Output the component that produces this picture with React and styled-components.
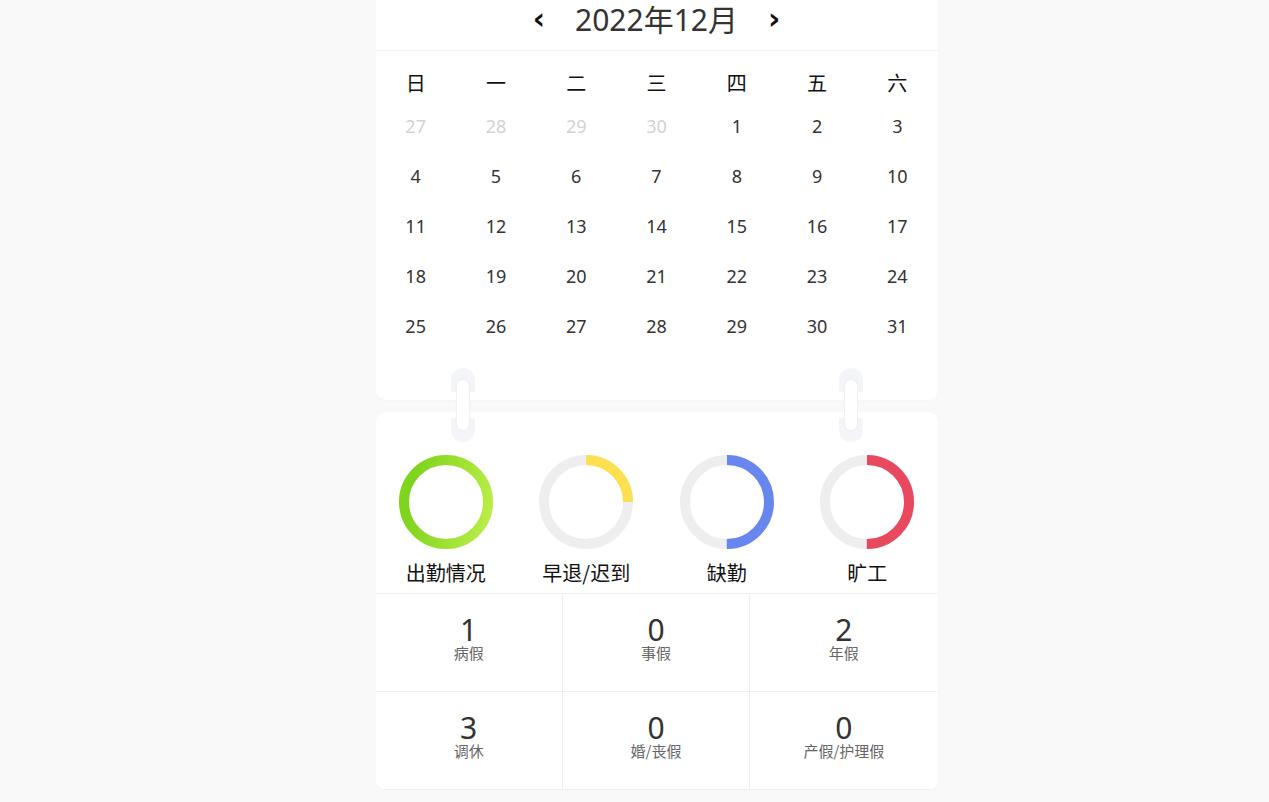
import React from "react";
import styled, { createGlobalStyle } from "styled-components";

const Global = createGlobalStyle`
  html, body { margin: 0; padding: 0; background: #f9f9f9; }
  body { font-family: "Noto Sans", "Noto Sans CJK SC", sans-serif; color: #333; }
`;

const Page = styled.div`
  width: 562px;
  margin-left: calc(50% - 259px);
  display: flex;
  flex-direction: column;
  gap: 12px;
  position: relative;
`;

const Card = styled.div`
  background: #fff;
  border-radius: ${(p) => (p.$top ? "0 0 10px 10px" : "10px")};
  box-shadow: 0 1px 3px rgba(0,0,0,0.02);
  overflow: hidden;
`;

const Header = styled.div`
  height: 40px;
  padding-bottom: 10px;
  border-bottom: 1px solid #f2f2f2;
  display: flex;
  align-items: center;
  justify-content: center;
  gap: 26px;
`;

const Arrow = styled.span`
  font-size: 30px;
  font-weight: 700;
  color: #111;
  line-height: 1;
  font-family: "DejaVu Sans", sans-serif;
  padding: 0 4px;
  margin-top: -2px;
`;

const Title = styled.div`
  font-size: 30px;
  color: #333;
  line-height: 40px;
`;

const Grid7 = styled.div`
  display: grid;
  grid-template-columns: repeat(7, 1fr);
`;

const WeekRow = styled(Grid7)`
  margin-top: 14px;
  height: 34px;
  margin-bottom: 2px;
  align-items: center;
`;

const WeekCell = styled.div`
  text-align: center;
  font-size: 20px;
  color: #111;
  font-family: "Noto Sans CJK SC", sans-serif;
`;

const Days = styled(Grid7)`
  grid-auto-rows: 50px;
  padding-bottom: 49px;
`;

const Day = styled.div`
  display: flex;
  align-items: center;
  justify-content: center;
  font-size: 18px;
  color: ${(p) => (p.$muted ? "#d2d2d2" : "#333")};
`;

const Hook = styled.div`
  position: absolute;
  top: 368px;
  left: ${(p) => p.$x}px;
  width: 24px;
  height: 74px;
  margin-left: -12px;
  border-radius: 12px;
  background: linear-gradient(#f4f5f8 0 24px, transparent 24px 50px, #f4f5f8 50px);
  display: flex;
  align-items: center;
  justify-content: center;
`;

const HookInner = styled.div`
  width: 12px;
  height: 50px;
  border-radius: 7px;
  background: #fff;
  border: 1px solid #eef0f3;
  box-shadow: 0 0 2px rgba(0,0,0,0.04);
`;

const Rings = styled.div`
  display: grid;
  grid-template-columns: repeat(4, 1fr);
  padding-top: 43px;
  padding-bottom: 6px;
`;

const RingItem = styled.div`
  display: flex;
  flex-direction: column;
  align-items: center;
`;

const RingLabel = styled.div`
  margin-top: 10px;
  font-size: 20px;
  line-height: 28px;
  color: #111;
  font-family: "Noto Sans CJK SC", sans-serif;
`;

const Stats = styled.div`
  display: grid;
  grid-template-columns: repeat(3, 1fr);
  border-top: 1px solid #efefef;
`;

const Stat = styled.div`
  height: 98px;
  padding-top: 21px;
  box-sizing: border-box;
  text-align: center;
  border-bottom: 1px solid #efefef;
  border-right: ${(p) => (p.$last ? "none" : "1px solid #efefef")};
`;

const StatNum = styled.div`
  font-size: 30px;
  line-height: 30px;
  color: #333;
`;

const StatLabel = styled.div`
  font-size: 15px;
  line-height: 16px;
  color: #666;
  font-family: "Noto Sans CJK SC", sans-serif;
`;

function Ring({ frac, color, gradient, id }) {
  const r = 42;
  const c = 2 * Math.PI * r;
  return (
    <svg width="94" height="94" viewBox="0 0 94 94">
      {gradient && (
        <defs>
          <linearGradient id={id} x1="0.2" y1="0" x2="0" y2="1">
            <stop offset="0" stopColor="#7fd41d" />
            <stop offset="1" stopColor="#bcee48" />
          </linearGradient>
        </defs>
      )}
      <circle cx="47" cy="47" r={r} fill="none" stroke="#eeeeee" strokeWidth="10" />
      <circle
        cx="47"
        cy="47"
        r={r}
        fill="none"
        stroke={gradient ? `url(#${id})` : color}
        strokeWidth="10"
        strokeDasharray={`${c * frac} ${c}`}
        transform="rotate(-90 47 47)"
      />
    </svg>
  );
}

const weeks = ["日", "一", "二", "三", "四", "五", "六"];
const days = [
  ...[27, 28, 29, 30].map((d) => ({ d, m: true })),
  ...Array.from({ length: 31 }, (_, i) => ({ d: i + 1, m: false })),
];

const rings = [
  { label: "出勤情况", frac: 1, gradient: true },
  { label: "早退/迟到", frac: 0.25, color: "#fde04f" },
  { label: "缺勤", frac: 0.5, color: "#6787ee" },
  { label: "旷工", frac: 0.5, color: "#e8495e" },
];

const stats = [
  { n: 1, l: "病假" },
  { n: 0, l: "事假" },
  { n: 2, l: "年假" },
  { n: 3, l: "调休" },
  { n: 0, l: "婚/丧假" },
  { n: 0, l: "产假/护理假" },
];

export default function App() {
  return (
    <>
      <Global />
      <Page>
        <Card $top>
          <Header>
            <Arrow>‹</Arrow>
            <Title>2022年12月</Title>
            <Arrow>›</Arrow>
          </Header>
          <WeekRow>
            {weeks.map((w) => (
              <WeekCell key={w}>{w}</WeekCell>
            ))}
          </WeekRow>
          <Days>
            {days.map((x, i) => (
              <Day key={i} $muted={x.m}>
                {x.d}
              </Day>
            ))}
          </Days>
        </Card>
        <Card>
          <Rings>
            {rings.map((r, i) => (
              <RingItem key={r.label}>
                <Ring frac={r.frac} color={r.color} gradient={r.gradient} id={`g${i}`} />
                <RingLabel>{r.label}</RingLabel>
              </RingItem>
            ))}
          </Rings>
          <Stats>
            {stats.map((s, i) => (
              <Stat key={s.l} $last={i % 3 === 2}>
                <StatNum>{s.n}</StatNum>
                <StatLabel>{s.l}</StatLabel>
              </Stat>
            ))}
          </Stats>
        </Card>
        <Hook $x={87}>
          <HookInner />
        </Hook>
        <Hook $x={475}>
          <HookInner />
        </Hook>
      </Page>
    </>
  );
}
